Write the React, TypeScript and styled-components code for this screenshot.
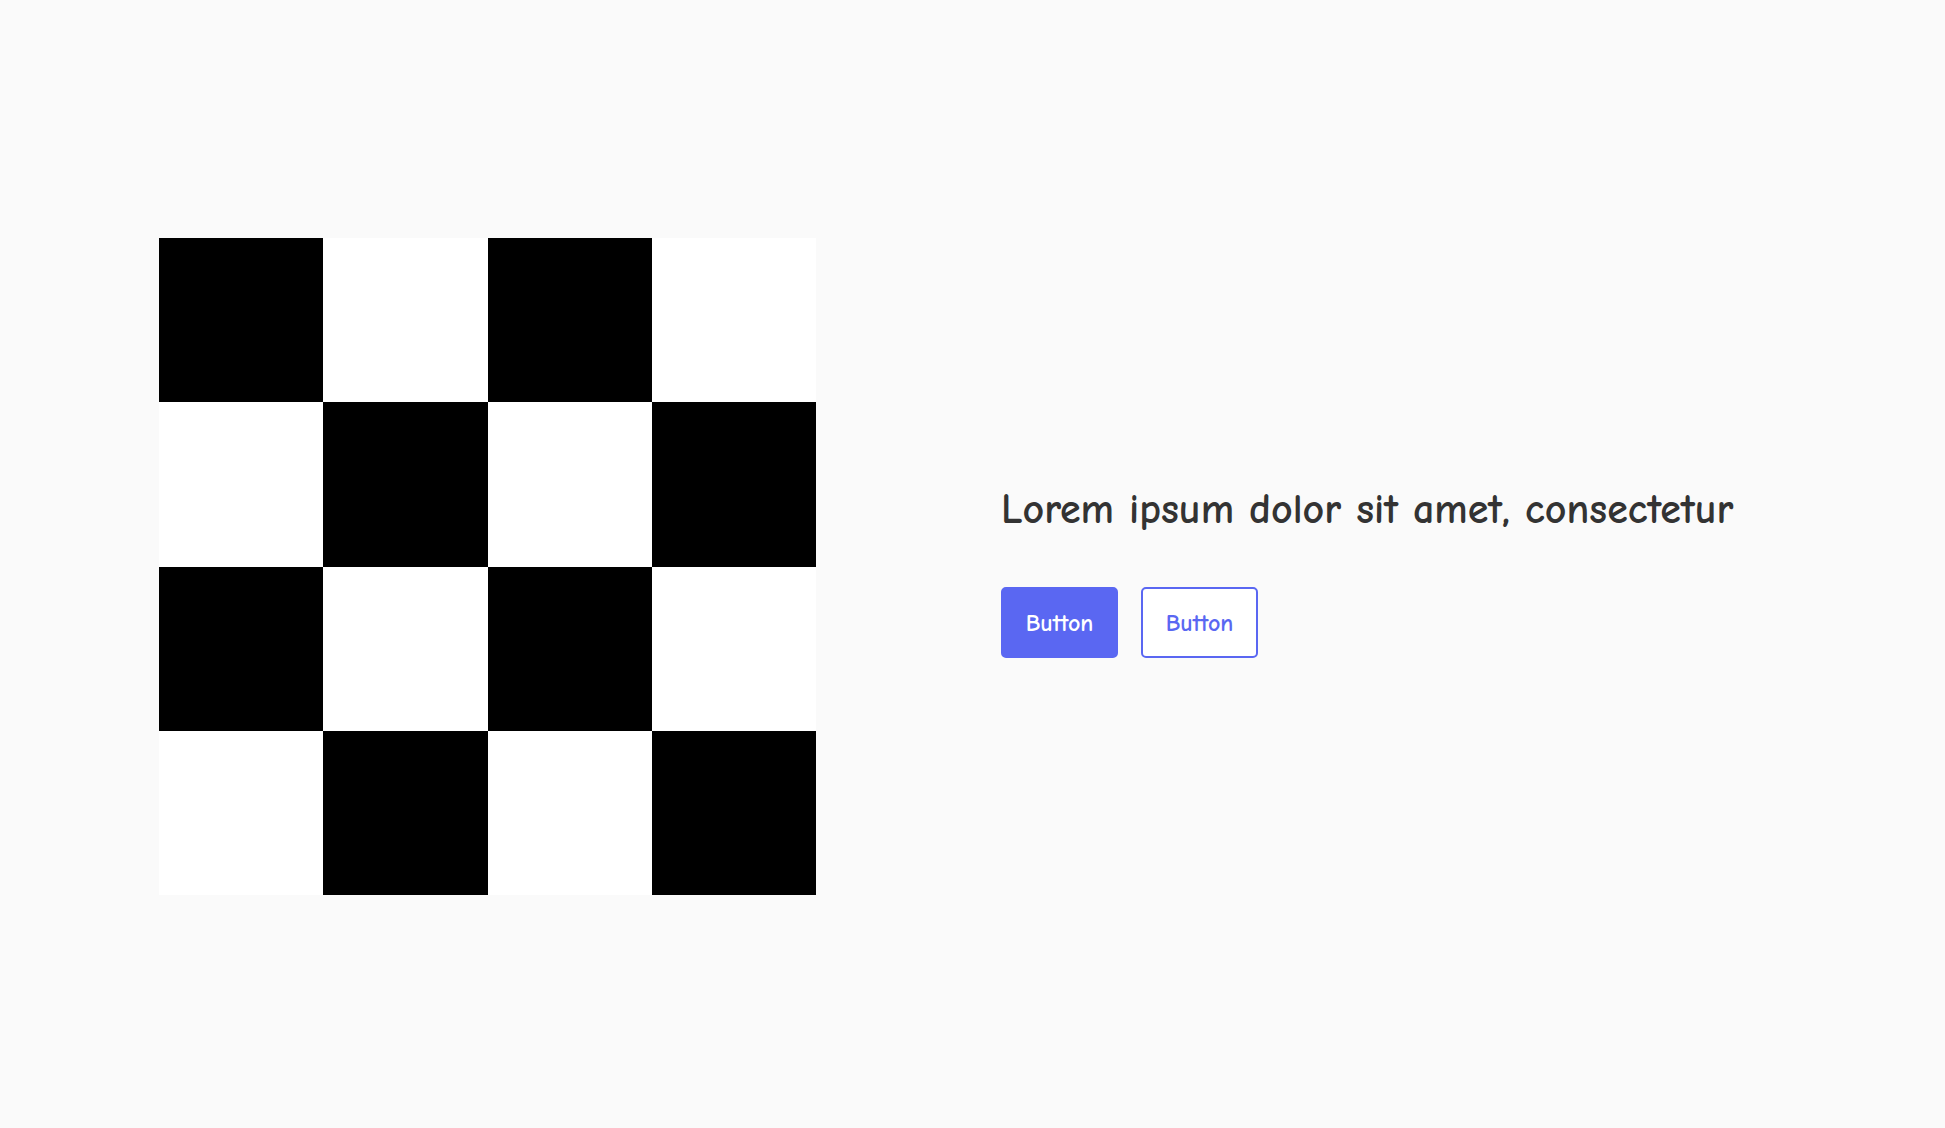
import React from "react";
import styled, { createGlobalStyle } from "styled-components";

const Global = createGlobalStyle`
  html, body { margin: 0; padding: 0; background: #fafafa; }
  body { font-family: "Comic Neue", "Comic Sans MS", cursive; }
`;

const Page = styled.main`
  box-sizing: border-box;
  height: 1128px;
  display: flex;
  align-items: center;
  padding: 5px 0 0 159px;
  gap: 185px;
`;

const Board = styled.div`
  width: 657px;
  height: 657px;
  display: grid;
  grid-template-columns: repeat(4, 1fr);
  grid-template-rows: repeat(4, 1fr);
`;

const Cell = styled.div<{ $dark: boolean }>`
  background: ${(p) => (p.$dark ? "#000" : "#fff")};
`;

const Content = styled.section`
  display: flex;
  flex-direction: column;
  padding-top: 10px;
`;

const Heading = styled.h1`
  margin: 0 0 52px;
  font-weight: 700;
  font-size: 42px;
  line-height: 1.2;
  color: #333;
`;

const Actions = styled.div`
  display: flex;
  gap: 23px;
`;

const Button = styled.button<{ $variant: "solid" | "outline" }>`
  box-sizing: border-box;
  width: 117px;
  height: 71px;
  border-radius: 5px;
  border: 2px solid #5a67f2;
  font-family: inherit;
  font-weight: 700;
  font-size: 24px;
  cursor: pointer;
  background: ${(p) => (p.$variant === "solid" ? "#5a67f2" : "#fff")};
  color: ${(p) => (p.$variant === "solid" ? "#fff" : "#5a67f2")};
`;

export default function App() {
  const cells = Array.from({ length: 16 }, (_, i) => {
    const r = Math.floor(i / 4);
    const c = i % 4;
    return (r + c) % 2 === 0;
  });
  return (
    <>
      <Global />
      <Page>
        <Board>
          {cells.map((d, i) => (
            <Cell key={i} $dark={d} />
          ))}
        </Board>
        <Content>
          <Heading>Lorem ipsum dolor sit amet, consectetur</Heading>
          <Actions>
            <Button $variant="solid">Button</Button>
            <Button $variant="outline">Button</Button>
          </Actions>
        </Content>
      </Page>
    </>
  );
}
